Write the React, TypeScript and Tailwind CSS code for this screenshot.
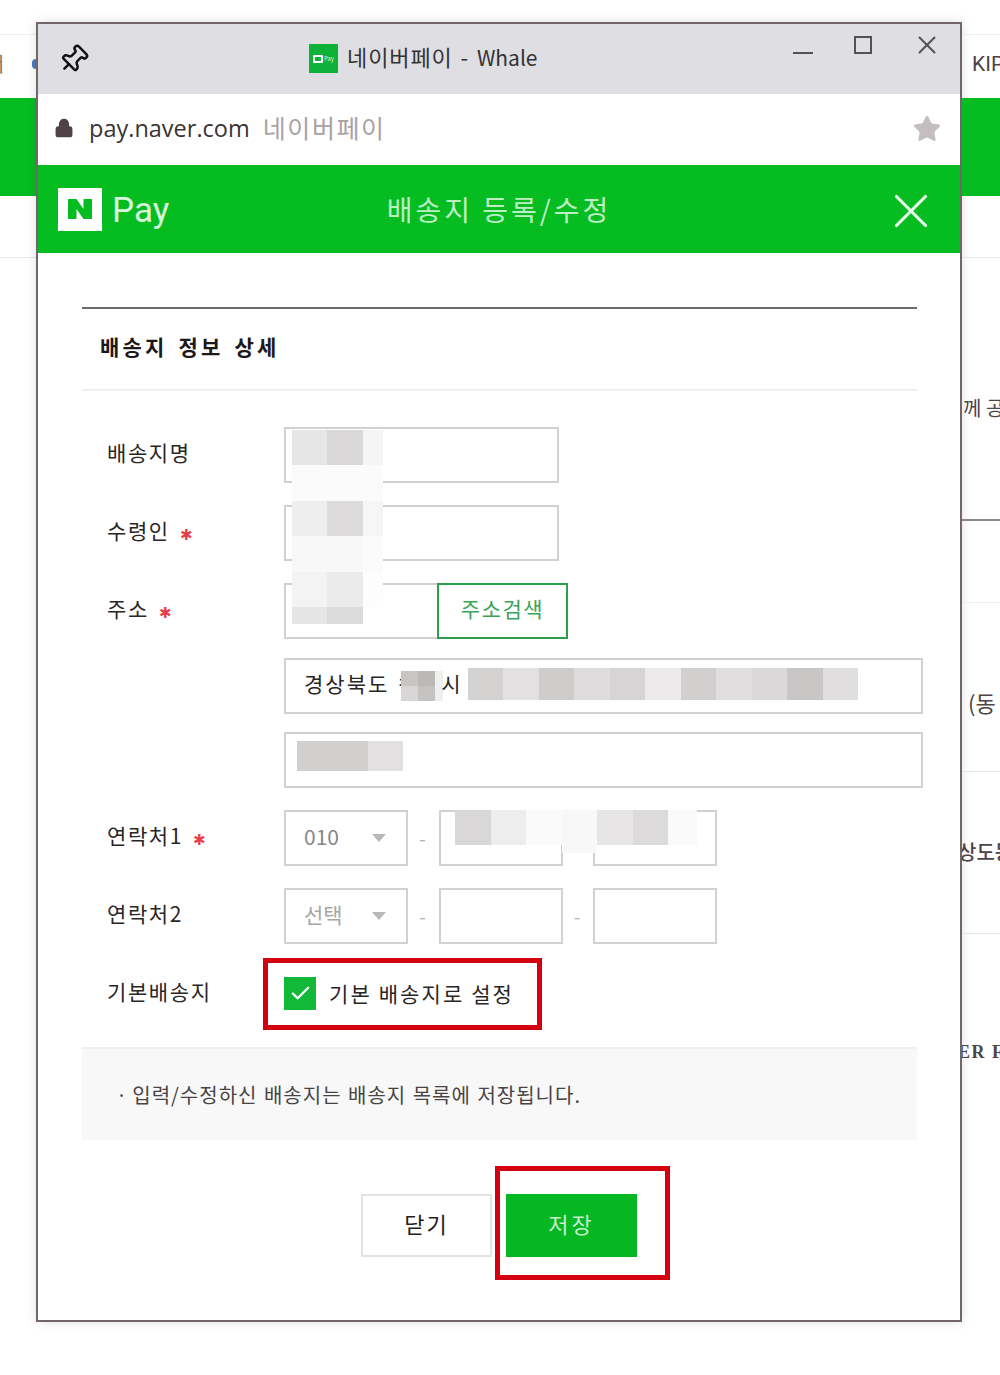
import { Check, Pin, Star, X, Lock } from 'lucide-react';

const font = { fontFamily: '"Noto Sans CJK KR", "Noto Sans", sans-serif' };

const nameBlur = [
  ['bg-[#e7e6e6]', 'bg-[#d9d7d7]', 'bg-[#f5f5f5]'],
  ['bg-[#fbfbfb]', 'bg-[#fbfbfb]', 'bg-[#fbfbfb]'],
  ['bg-[#eeeeee]', 'bg-[#dddbdb]', 'bg-[#f6f6f6]'],
  ['bg-[#f8f8f8]', 'bg-[#f8f8f8]', 'bg-[#fbfbfb]'],
  ['bg-[#f3f3f3]', 'bg-[#ebebeb]', 'bg-[#fdfdfd]'],
];

const addressBlur = [
  'bg-[#d4d1d1]',
  'bg-[#e2e0e0]',
  'bg-[#cfcccc]',
  'bg-[#dedcdc]',
  'bg-[#d6d4d4]',
  'bg-[#eceaea]',
  'bg-[#d2cfcf]',
  'bg-[#e0dede]',
  'bg-[#dad8d8]',
  'bg-[#c9c6c6]',
  'bg-[#e0dede]',
];

const phoneBlur = [
  'h-[35px] w-[35.5px] bg-[#d9d7d7]',
  'h-[35px] w-[35.5px] bg-[#eeeded]',
  'h-[35px] w-[35.5px] bg-[#fafafa]',
  'h-[43px] w-[35.5px] bg-[#f8f8f8]',
  'h-[35px] w-[35.5px] bg-[#e7e5e5]',
  'h-[35px] w-[35.5px] bg-[#dcdada]',
  'h-[35px] w-[29px] bg-[#fafafa]',
];

function Required() {
  return <span className="mt-[5px] ml-[10px] text-[15px] leading-none text-[#e8404a]">✱</span>;
}

function Input({ className = '' }: { className?: string }) {
  return <div className={`h-[56px] border-2 border-[#d2d0d0] bg-white ${className}`} />;
}

function Row({ label, required, children }: { label?: string; required?: boolean; children: React.ReactNode }) {
  return (
    <div className="flex h-[56px] items-center">
      <div className="flex w-[202px] items-center pb-[4px] pl-[25px] text-[21px] tracking-[1.6px] text-[#2b2526]">
        {label}
        {required && <Required />}
      </div>
      {children}
    </div>
  );
}

function SelectBox({ value, muted }: { value: string; muted?: boolean }) {
  return (
    <div className="flex h-[56px] w-[124px] items-center justify-between border-2 border-[#d2d0d0] pr-[20px] pl-[18px]">
      <span className={`pb-[3px] text-[21px] ${muted ? 'text-[#a8a5a5]' : 'text-[#8a8686]'}`}>{value}</span>
      <span className="h-0 w-0 border-x-[7px] border-t-[8px] border-x-transparent border-t-[#b9b7b7]" />
    </div>
  );
}

function Dash({ className = 'w-[31px]' }: { className?: string }) {
  return <span className={`pr-[2px] text-center text-[19px] text-[#b5b3b3] ${className}`}>-</span>;
}

function App() {
  return (
    <div className="flex h-[1375px] w-[1000px] overflow-hidden bg-white" style={font}>
      {/* 뒤쪽 페이지 왼쪽 */}
      <aside className="flex h-full w-[36px] shrink-0 flex-col overflow-hidden">
        <div className="h-[35px] border-b border-[#eeeeee]" />
        <div className="flex h-[63px] items-center justify-between pb-[6px] text-[20px] text-[#8a7a60]">
          <span className="-ml-[14px]">너</span>
          <span className="-mr-[4px] h-[10px] w-[8px] rounded-full bg-[#3f7fc0]" />
        </div>
        <div className="h-[98px] bg-[#05bd21]" />
        <div className="h-[62px] border-b border-[#e6e6e6]" />
      </aside>

      {/* 팝업 창 */}
      <main className="mt-[22px] flex h-[1300px] w-[926px] shrink-0 flex-col border-2 border-[#726668] bg-white shadow-[0_0_10px_rgba(0,0,0,0.12)]">
        <div className="grid h-[70px] shrink-0 grid-cols-[271px_1fr_auto] items-center bg-[#dedee3]">
          <div className="pl-[20px]">
            <Pin size={31} strokeWidth={1.9} className="rotate-45 text-[#111111]" />
          </div>
          <div className="flex items-center gap-[9px] text-[22px] text-[#333333]">
            <div className="mb-[1px] flex h-[29px] w-[29px] items-center justify-center gap-[1px] bg-[#0eb238]">
              <span className="h-[8px] w-[10px] rounded-[1px] border-2 border-white" />
              <span className="text-[6px] leading-none text-[#cdeed4]">Pay</span>
            </div>
            <span className="mb-[5px] tracking-[0.9px] [word-spacing:2px]">
              네이버페이 - <span className="text-[21px] tracking-[0px]">Whale</span>
            </span>
          </div>
          <div className="flex items-start gap-[41px] self-start pt-[6px] pr-[18px] text-[#555055]">
            <span className="mt-[22px] h-[2px] w-[20px] bg-[#555055]" />
            <span className="mt-[6px] h-[18px] w-[18px] border-2 border-[#555055]" />
            <X size={30} strokeWidth={1.6} className="-ml-[1px]" />
          </div>
        </div>

        <div className="flex h-[71px] shrink-0 items-center justify-between pr-[18px] pb-[2px] pl-[16px]">
          <div className="flex items-center">
            <Lock size={20} fill="#4f4248" strokeWidth={2.2} className="mb-[2px] text-[#4f4248]" />
            <span className="ml-[15px] text-[23.5px] text-[#3a3334]" style={{ fontFamily: '"Open Sans", sans-serif' }}>
              pay.naver.com
            </span>
            <span className="mb-[2px] ml-[13px] text-[25px] tracking-[1.6px] text-[#a9a2a2]">네이버페이</span>
          </div>
          <Star size={30} fill="#c4bfbf" strokeWidth={1} className="text-[#c4bfbf]" />
        </div>

        <div className="grid h-[88px] shrink-0 grid-cols-[1fr_auto_1fr] items-center bg-[#05bd21]">
          <div className="flex items-center pl-[20px]">
            <div className="flex h-[43px] w-[44px] items-center justify-center bg-white">
              <svg width="24" height="20" viewBox="0 0 24 20" fill="#05bd21">
                <path d="M0 0H8.5L15.5 10V0H24V20H15.5L8.5 10V20H0Z" />
              </svg>
            </div>
            <span className="mt-[2px] ml-[10px] text-[35px] leading-none text-[#d8f5dc]" style={{ fontFamily: 'Roboto, sans-serif' }}>
              Pay
            </span>
          </div>
          <h1 className="text-[28px] tracking-[3px] text-[#bdeec4]">배송지 등록/수정</h1>
          <div className="flex justify-end pt-[4px] pr-[20px]">
            <X size={58} strokeWidth={1.3} className="text-[#eafbec]" />
          </div>
        </div>

        <div className="relative flex flex-1 flex-col pt-[54px] pl-[44px]">
          <section className="w-[835px]">
            <div className="border-t-2 border-[#6f6a6a]" />
            <h2 className="flex h-[82px] items-center border-b-2 border-[#f0efef] pb-[4px] pl-[18px] text-[21px] font-bold tracking-[3.2px] text-[#1d1819] [word-spacing:3px]">
              배송지 정보 상세
            </h2>
          </section>

          <form className="mt-[36px] flex flex-col gap-[22px]">
            <Row label="배송지명">
              <Input className="w-[275px]" />
            </Row>
            <Row label="수령인" required>
              <Input className="w-[275px]" />
            </Row>
            <Row label="주소" required>
              <div className="flex">
                <Input className="w-[153px] border-r-0" />
                <button type="button" className="h-[56px] w-[131px] border-2 border-[#2f9e4a] pb-[4px] text-[21px] tracking-[1.5px] text-[#3aa457]">
                  주소검색
                </button>
              </div>
            </Row>
            <div className="-mt-[3px] flex flex-col gap-[18px] pl-[202px]">
              <div className="flex h-[56px] w-[639px] items-center border-2 border-[#d2d0d0] pl-[18px] text-[21px] text-[#2b2526]">
                <span className="mb-[4px] tracking-[2px]">경상북도 ㅋ</span>
                <span className="-ml-[16px] grid w-[42px] grid-cols-[17px_17px_8px]">
                  <i className="h-[15px] bg-[#c9c5c5]" />
                  <i className="h-[15px] bg-[#bcb8b8]" />
                  <i className="h-[15px] bg-[#f0f0f0]" />
                  <i className="h-[15px] bg-[#d8d6d6]" />
                  <i className="h-[15px] bg-[#c5c2c2]" />
                  <i className="h-[15px] bg-[#eeeeee]" />
                </span>
                <span className="mb-[4px] -ml-[2px]">시</span>
                <span className="mb-[4px] ml-[7px] flex">
                  {addressBlur.map((color, i) => (
                    <i key={i} className={`h-[32px] w-[35.5px] ${color}`} />
                  ))}
                </span>
              </div>
              <div className="flex h-[56px] w-[639px] items-center border-2 border-[#d2d0d0] pb-[8px] pl-[11px]">
                <i className="h-[30px] w-[71px] bg-[#d2cfcf]" />
                <i className="h-[30px] w-[35px] bg-[#e2e0e0]" />
              </div>
            </div>
            <Row label="연락처1" required>
              <SelectBox value="010" />
              <Dash />
              <Input className="w-[124px]" />
              <span className="w-[30px]" />
              <Input className="w-[124px]" />
            </Row>
            <Row label="연락처2">
              <SelectBox value="선택" muted />
              <Dash />
              <Input className="w-[124px]" />
              <Dash className="w-[30px]" />
              <Input className="w-[124px]" />
            </Row>
            <Row label="기본배송지">
              <label className="flex items-center gap-[13px] pb-[1px] text-[21px] tracking-[2.1px] text-[#2b2526]">
                <span className="flex h-[33px] w-[32px] items-center justify-center bg-[#12b939]">
                  <Check size={23} strokeWidth={2.4} className="text-white" />
                </span>
                기본 배송지로 설정
              </label>
            </Row>
          </form>

          <div className="mt-[25px] flex h-[93px] w-[835px] items-center border-t-2 border-[#f0efef] bg-[#f8f8f8] pl-[34px] text-[20px] tracking-[1px] text-[#4a4344] [word-spacing:1px]">
            ·<span className="ml-[4px]">입력/수정하신 배송지는 배송지 목록에 저장됩니다.</span>
          </div>

          <div className="mt-[54px] flex gap-[14px] pl-[279px]">
            <button type="button" className="h-[63px] w-[131px] border-2 border-[#e4e3e3] pb-[4px] text-[22px] tracking-[2px] text-[#221d1e]">
              닫기
            </button>
            <button type="button" className="h-[63px] w-[131px] bg-[#05b722] pb-[4px] text-[22px] tracking-[3px] text-[#c6f0cd]">
              저장
            </button>
          </div>

          {/* 빨간 강조 박스 */}
          <div className="absolute top-[705px] left-[225px] h-[72px] w-[279px] border-[5px] border-[#d3000f]" />
          <div className="absolute top-[913px] left-[457px] h-[114px] w-[175px] border-[5px] border-[#d3000f]" />

          {/* 이름 가림 */}
          <div className="absolute top-[177px] left-[254px] grid w-[91px] grid-cols-[35px_36px_20px]">
            {nameBlur.flat().map((color, i) => (
              <i key={i} className={`h-[35.4px] ${color}`} />
            ))}
            <i className="h-[17px] bg-[#e6e5e5]" />
            <i className="h-[17px] bg-[#dcdcdc]" />
          </div>
          {/* 번호 가림 */}
          <div className="absolute top-[557px] left-[417px] flex items-start">
            {phoneBlur.map((size, i) => (
              <i key={i} className={size} />
            ))}
          </div>
        </div>
      </main>

      {/* 뒤쪽 페이지 오른쪽 */}
      <aside className="flex h-full w-[38px] shrink-0 flex-col overflow-hidden text-[20px] whitespace-nowrap text-[#4c4445]">
        <div className="h-[35px] border-b border-[#eeeeee]" />
        <div className="flex h-[63px] items-center pb-[4px] pl-[10px] text-[21px]" style={{ fontFamily: 'Roboto, sans-serif' }}>
          KIP
        </div>
        <div className="h-[98px] bg-[#05bd21]" />
        <div className="h-[62px] border-b border-[#e6e6e6]" />
        <div className="h-[263px] border-b-2 border-[#8d8787] pt-[135px] pl-[1px]">께 공</div>
        <div className="h-[82px] border-b border-[#eeeeee]" />
        <div className="h-[169px] border-b border-[#e6e6e6] pt-[83px] pl-[6px] text-[22px]">(동</div>
        <div className="h-[162px] border-b border-[#e6e6e6] pt-[65px] font-medium">
          <span className="-ml-[4px] block">상도동</span>
        </div>
        <div className="pt-[105px] text-[18px] font-bold tracking-[1.5px] text-[#4c4445]" style={{ fontFamily: '"Liberation Serif", serif' }}>
          <span className="-ml-[4px] block">ER FA</span>
        </div>
      </aside>
    </div>
  );
}

export default App;
